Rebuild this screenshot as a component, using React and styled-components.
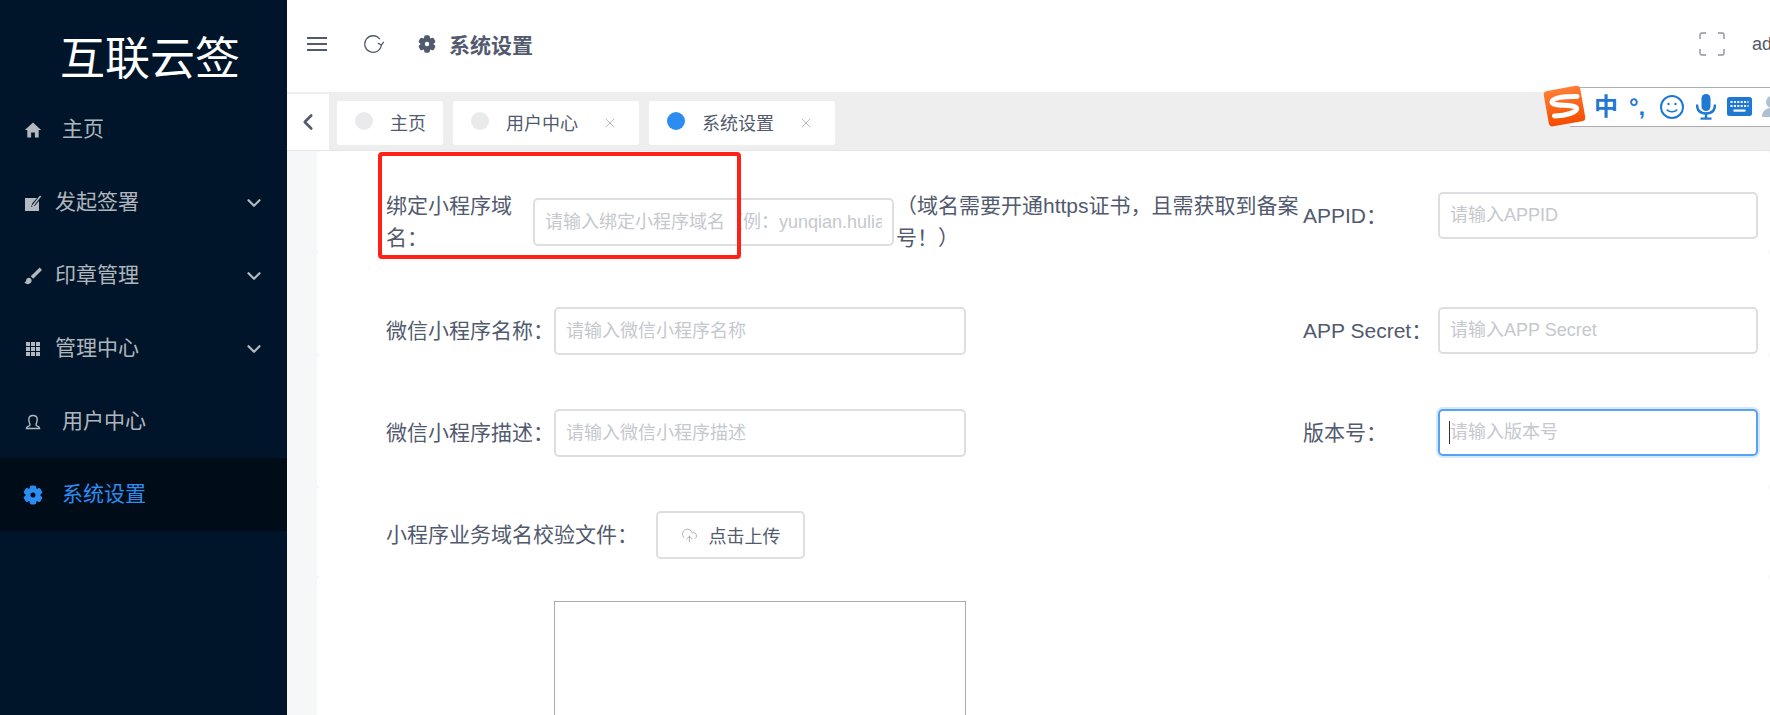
import React from "react";
import styled, { createGlobalStyle } from "styled-components";
import { IoMdHome, IoMdBrush } from "react-icons/io";
import { ChevronDown, ChevronLeft, X, CloudUpload } from "lucide-react";

const TEXT = "#515a6e";
const BORDER = "#dcdee2";
const PRIMARY = "#2d8cf0";
const IMEBLUE = "#1f78d1";

const GlobalStyle = createGlobalStyle`
  html, body {
    margin: 0;
    padding: 0;
    height: 100%;
    overflow: hidden;
    font-family: "Liberation Sans", "Noto Sans CJK SC", sans-serif;
  }
  * { box-sizing: border-box; }
`;

const Layout = styled.div`
  position: relative;
  display: flex;
  width: 100%;
  height: 715px;
  overflow: hidden;
  background: #fff;
`;

const Sidebar = styled.aside`
  flex: 0 0 287px;
  background: #001529;
`;

const Logo = styled.div`
  height: 93px;
  padding: 34px 0 0 60px;
  color: #fff;
  font-size: 45px;
  line-height: 52px;
  white-space: nowrap;
`;

const MenuItem = styled.div`
  display: flex;
  align-items: center;
  height: 73px;
  padding: 0 22px 0 23px;
  font-size: 21px;
  color: ${props => (props.$active ? PRIMARY : "rgba(255,255,255,.7)")};
  background: ${props => (props.$active ? "#000c17" : "transparent")};
`;

const MenuIcon = styled.span`
  display: flex;
  align-items: center;
  justify-content: center;
  flex: 0 0 20px;
  width: 20px;
  min-width: 0;
  height: 20px;
`;

const MenuLabel = styled.span`
  flex: 1;
  margin: 0 0 5px ${props => (props.$sub ? "12px" : "19px")};
`;

const Main = styled.main`
  flex: 1;
  min-width: 0;
  display: flex;
  flex-direction: column;
`;

const Header = styled.header`
  flex: 0 0 94px;
  display: flex;
  align-items: center;
  padding: 0 0 4px 20px;
  border-bottom: 2px solid #eeeeee;
  color: ${TEXT};
  white-space: nowrap;
`;

const HeaderTitle = styled.span`
  margin-left: 13px;
  font-size: 21px;
  font-weight: 700;
  color: ${TEXT};
`;

const HeaderRight = styled.div`
  flex: 0 0 71px;
  min-width: 0;
  margin-left: auto;
  display: flex;
  align-items: center;
  gap: 27px;
  font-size: 18px;

  svg {
    flex: none;
  }
`;

const RefreshSlot = styled.span`
  display: flex;
  margin-left: 36px;
  margin-right: 33px;
  color: ${TEXT};
`;

const TabBar = styled.div`
  flex: 0 0 57px;
  display: flex;
  align-items: center;
  gap: 10px;
  background: #eeeeee;
  border-bottom: 1px solid #e6e6e6;
`;

const BackButton = styled.div`
  flex: 0 0 42px;
  align-self: stretch;
  margin-right: -2px;
  display: flex;
  align-items: center;
  justify-content: center;
  background: #fff;
  color: ${TEXT};
`;

const Tab = styled.div`
  display: flex;
  align-items: center;
  height: 44px;
  margin-top: 1px;
  padding: 0 ${props => (props.$closable ? "21px" : "17px")} 2px 18px;
  background: #fff;
  border-radius: 3px;
  color: ${TEXT};
  font-size: 18px;
  white-space: nowrap;
`;

const TabDot = styled.span`
  flex: 0 0 18px;
  height: 18px;
  margin: -2px 17px 0 0;
  border-radius: 50%;
  background: ${props => (props.$active ? PRIMARY : "#e8eaec")};
`;

const TabClose = styled.span`
  display: flex;
  margin: 2px 0 0 24px;
  color: #a8a8a8;
`;

const Content = styled.section`
  position: relative;
  flex: 1;
  min-height: 0;
  padding-left: 30px;
  background: #f5f7f9;
  overflow: hidden;
`;

const Card = styled.div`
  display: flex;
  align-items: flex-start;
  height: ${props => props.$height}px;
  padding-left: 69px;
  background: #fff;
  border-radius: 4px;
`;

const LeftCol = styled.div`
  flex: 0 0 917px;
`;

const RightCol = styled.div`
  flex: 1;
`;

const Field = styled.div`
  display: flex;
  align-items: center;
  padding-top: ${props => props.$top}px;
`;

const Label = styled.label`
  flex: 0 0 ${props => props.$width}px;
  color: ${TEXT};
  font-size: 21px;
  line-height: 32px;
`;

const InputWrap = styled.div`
  position: relative;
  display: flex;
`;

const Input = styled.input`
  width: ${props => props.$width}px;
  height: ${props => props.$height || 48}px;
  padding: 0 10px;
  border: 2px solid ${props => (props.$focus ? "#57a3f3" : BORDER)};
  border-radius: 5px;
  outline: none;
  background: #fff;
  color: ${TEXT};
  font-family: inherit;
  font-size: 18px;
  box-shadow: ${props => (props.$focus ? "0 0 0 2px rgba(45,140,240,.2)" : "none")};

  &::placeholder {
    color: #c5c8ce;
    opacity: 1;
  }
`;

const Caret = styled.span`
  position: absolute;
  left: 11px;
  top: 12px;
  width: 1px;
  height: 23px;
  background: #333;
`;

const Note = styled.div`
  flex: 0 0 404px;
  margin-left: 2px;
  color: ${TEXT};
  font-size: 21px;
  line-height: 32px;
`;

const UploadButton = styled.button`
  display: flex;
  align-items: center;
  justify-content: center;
  gap: 11px;
  width: 149px;
  height: 48px;
  padding: 0;
  border: 2px solid ${BORDER};
  border-radius: 5px;
  background: #fff;
  color: ${TEXT};
  font-family: inherit;
  font-size: 18px;
`;

const EditorBox = styled.div`
  width: 412px;
  height: 320px;
  margin: 24px 0 0 168px;
  border: 1px solid #aaaaaa;
  background: #fff;
`;

const Annotation = styled.div`
  position: absolute;
  left: 91px;
  top: 1px;
  width: 363px;
  height: 107px;
  border: 4px solid #ff2018;
  border-radius: 4px;
  pointer-events: none;
`;

const ImeBar = styled.div`
  position: absolute;
  top: 87px;
  right: 0;
  width: 200px;
  height: 40px;
  display: flex;
  align-items: center;
  padding-left: 24px;
  background: #fff;
  border-top: 1px solid #adadad;
  border-bottom: 1px solid #adadad;
  color: ${IMEBLUE};
  overflow: hidden;
`;

const ImeLogo = styled.svg`
  position: absolute;
  top: 83px;
  left: 1541px;
`;

const ImeText = styled.span`
  flex: 0 0 ${props => props.$width}px;
  margin-right: ${props => props.$gap}px;
  font-size: 24px;
  font-weight: 700;
  line-height: 1;
  white-space: nowrap;
`;

const ImeIcon = styled.svg`
  flex: none;
  margin-right: ${props => props.$gap}px;
`;

const EditIcon = () => (
  <svg width="18" height="18" viewBox="0 0 18 18">
    <path fill="currentColor" d="M1 4h12L8.500 9 7 13l4-1.600L15 7v10H1z" />
    <path fill="none" stroke="currentColor" strokeWidth="1.600" d="M8.400 12.200 16.600 2" />
  </svg>
);

const GridIcon = () => (
  <svg width="16" height="16" viewBox="0 0 16 16" fill="currentColor">
    {[1, 6, 11].map(y =>
      [1, 6, 11].map(x => <rect key={`${x}-${y}`} x={x} y={y} width="4" height="4" />)
    )}
  </svg>
);

const UserIcon = () => (
  <svg width="18" height="18" viewBox="0 0 18 18" fill="none" stroke="currentColor" strokeWidth="1.400">
    <path d="M6 12c0-2-1.400-3-1.200-6 .2-2.200 2-3.500 4.200-3.500s4 1.300 4.200 3.500c.2 3-1.200 4-1.200 6 0 1 3.500 1.500 3.500 3v.5H2.500V15c0-1.500 3.500-2 3.500-3z" />
  </svg>
);

const GearIcon = ({ size = 20 }) => (
  <svg width={size} height={size} viewBox="0 0 20 20" fill="currentColor">
    {[0, 60, 120, 180, 240, 300].map(angle => (
      <rect key={angle} x="6.800" y="0.400" width="6.400" height="5" rx="1.800" transform={`rotate(${angle} 10 10)`} />
    ))}
    <circle cx="10" cy="10" r="5" fill="none" stroke="currentColor" strokeWidth="5" />
  </svg>
);

const RefreshIcon = () => (
  <svg width="22" height="20" viewBox="0 0 22 20" fill="none" stroke="currentColor" strokeWidth="1.300">
    <path d="M16.800 5.200A8.300 8.300 0 1 0 18.300 11" />
    <path d="M14.800 9.200 18.400 11l2.400-3.200" />
  </svg>
);

const HamburgerIcon = () => (
  <svg width="20" height="16" viewBox="0 0 20 16" fill="currentColor">
    <rect y="1" width="20" height="2" />
    <rect y="7" width="20" height="2" />
    <rect y="13" width="20" height="2" />
  </svg>
);

const FullscreenIcon = () => (
  <svg width="26" height="24" viewBox="0 0 26 24" fill="none" stroke="#8d93a1" strokeWidth="1.400">
    <path d="M1 7V3a2 2 0 0 1 2-2h4M19 1h4a2 2 0 0 1 2 2v4M25 17v4a2 2 0 0 1-2 2h-4M7 23H3a2 2 0 0 1-2-2v-4" />
  </svg>
);

const menu = [
  { label: "主页", icon: <IoMdHome size={22} /> },
  { label: "发起签署", icon: <EditIcon />, sub: true },
  { label: "印章管理", icon: <IoMdBrush size={24} />, sub: true },
  { label: "管理中心", icon: <GridIcon />, sub: true },
  { label: "用户中心", icon: <UserIcon /> },
  { label: "系统设置", icon: <GearIcon />, active: true }
];

const tabs = [
  { label: "主页" },
  { label: "用户中心", closable: true },
  { label: "系统设置", closable: true, active: true }
];

export default function App() {
  return (
    <Layout>
      <GlobalStyle />
      <Sidebar>
        <Logo>互联云签</Logo>
        {menu.map(item => (
          <MenuItem key={item.label} $active={item.active}>
            <MenuIcon>{item.icon}</MenuIcon>
            <MenuLabel $sub={item.sub}>{item.label}</MenuLabel>
            {item.sub && <ChevronDown size={22} strokeWidth={2.4} />}
          </MenuItem>
        ))}
      </Sidebar>
      <Main>
        <Header>
          <HamburgerIcon />
          <RefreshSlot><RefreshIcon /></RefreshSlot>
          <GearIcon size={18} />
          <HeaderTitle>系统设置</HeaderTitle>
          <HeaderRight>
            <FullscreenIcon />
            <span>admin</span>
          </HeaderRight>
        </Header>
        <TabBar>
          <BackButton><ChevronLeft size={26} strokeWidth={2.4} /></BackButton>
          {tabs.map(tab => (
            <Tab key={tab.label} $closable={tab.closable}>
              <TabDot $active={tab.active} />
              {tab.label}
              {tab.closable && <TabClose><X size={16} strokeWidth={1.2} /></TabClose>}
            </Tab>
          ))}
        </TabBar>
        <Content>
          <Card $height={101}>
            <LeftCol>
              <Field $top={39}>
                <Label $width={147}>绑定小程序域名：</Label>
                <Input $width={361} placeholder="请输入绑定小程序域名（例：yunqian.huliantong.com）" />
                <Note>（域名需要开通https证书，且需获取到备案号！）</Note>
              </Field>
            </LeftCol>
            <RightCol>
              <Field $top={41}>
                <Label $width={135}>APPID：</Label>
                <Input $width={320} $height={47} placeholder="请输入APPID" />
              </Field>
            </RightCol>
          </Card>
          <Card $height={103}>
            <LeftCol>
              <Field $top={55}>
                <Label $width={168}>微信小程序名称：</Label>
                <Input $width={412} placeholder="请输入微信小程序名称" />
              </Field>
            </LeftCol>
            <RightCol>
              <Field $top={55}>
                <Label $width={135}>APP Secret：</Label>
                <Input $width={320} $height={47} placeholder="请输入APP Secret" />
              </Field>
            </RightCol>
          </Card>
          <Card $height={132}>
            <LeftCol>
              <Field $top={54}>
                <Label $width={168}>微信小程序描述：</Label>
                <Input $width={412} placeholder="请输入微信小程序描述" />
              </Field>
            </LeftCol>
            <RightCol>
              <Field $top={54}>
                <Label $width={135}>版本号：</Label>
                <InputWrap>
                  <Input $width={320} $height={47} $focus placeholder="请输入版本号" />
                  <Caret />
                </InputWrap>
              </Field>
            </RightCol>
          </Card>
          <Card $height={90}>
            <Field $top={24}>
              <Label $width={270}>小程序业务域名校验文件：</Label>
              <UploadButton>
                <CloudUpload size={17} strokeWidth={1} color="#8d93a1" />
                点击上传
              </UploadButton>
            </Field>
          </Card>
          <Card $height={400}>
            <EditorBox />
          </Card>
          <Annotation />
        </Content>
      </Main>
      <ImeBar>
        <ImeText $width={24} $gap={11}>中</ImeText>
        <ImeText $width={18} $gap={13}>°,</ImeText>
        <ImeIcon $gap={12} width="24" height="24" viewBox="0 0 24 24" fill="none" stroke="currentColor" strokeWidth="2">
          <circle cx="12" cy="12" r="11" />
          <circle cx="8.500" cy="9" r="1.200" fill="currentColor" stroke="none" />
          <circle cx="15.500" cy="9" r="1.200" fill="currentColor" stroke="none" />
          <path d="M7 14.500c1.500 3 8.500 3 10 0" strokeWidth="1.600" />
        </ImeIcon>
        <ImeIcon $gap={11} width="20" height="26" viewBox="0 0 20 26" fill="currentColor">
          <rect x="5.500" y="0" width="9" height="17" rx="4.500" />
          <path d="M1 10.500c0 6 3.500 9 9 9s9-3 9-9" fill="none" stroke="currentColor" strokeWidth="2.400" />
          <rect x="8.800" y="19" width="2.400" height="5" />
          <rect x="4.500" y="23.500" width="11" height="2.200" />
        </ImeIcon>
        <ImeIcon $gap={10} width="25" height="20" viewBox="0 0 25 20">
          <rect width="25" height="19" rx="2.500" fill="currentColor" />
          <path d="M3.500 5h18M3.500 9h18" stroke="#fff" strokeWidth="2" strokeDasharray="2 1.400" />
          <rect x="6.500" y="12.500" width="12" height="2.200" fill="#fff" />
        </ImeIcon>
        <ImeIcon $gap={0} width="24" height="24" viewBox="0 0 24 24" fill="#b1bfd3">
          <circle cx="10" cy="7" r="6" />
          <path d="M0 22c0-6 4-9 10-9s10 3 10 9z" />
        </ImeIcon>
      </ImeBar>
      <ImeLogo width="48" height="46" viewBox="0 0 48 46">
        <defs>
          <linearGradient id="sogou" x1="0" y1="0" x2="0" y2="1">
            <stop offset="0" stopColor="#ff7d35" />
            <stop offset="1" stopColor="#f44d00" />
          </linearGradient>
        </defs>
        <rect x="5" y="5" width="37" height="36" rx="4" fill="url(#sogou)" transform="rotate(-10 24 23)" />
        <path d="M36 13.500C24 13 11 14.500 11 19c0 5 22 1.500 24.500 6 1.500 4-10 7.500-22 8" fill="none" stroke="#fff" strokeWidth="5" strokeLinecap="round" />
      </ImeLogo>
    </Layout>
  );
}
